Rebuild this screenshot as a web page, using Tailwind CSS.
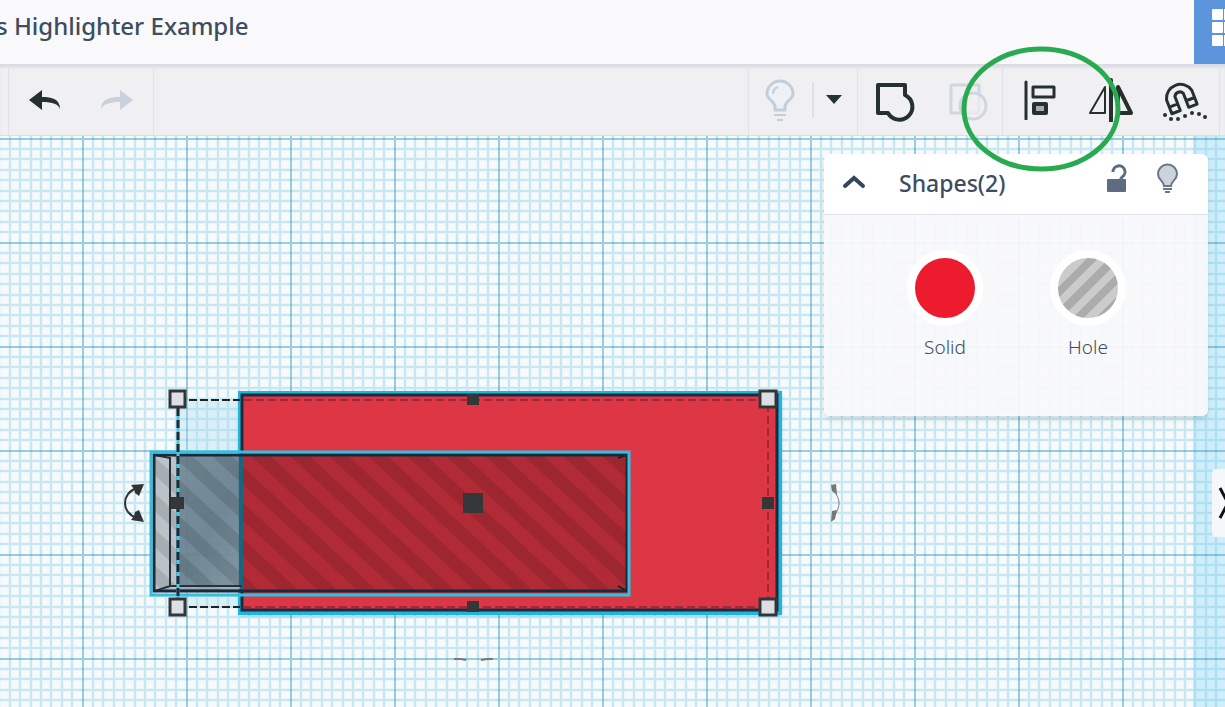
<!DOCTYPE html>
<html lang="en">
<head>
<meta charset="utf-8">
<meta name="viewport" content="width=device-width, initial-scale=1">
<title>Highlighter Example</title>
<script src="https://cdn.jsdelivr.net/npm/@tailwindcss/browser@4"></script>
</head>
<body class="relative flex h-screen flex-col overflow-hidden bg-[#f9f9fc] font-['Noto_Sans','Open_Sans',sans-serif] text-[#3d4c60]">

<header class="flex h-16 shrink-0 items-stretch justify-between bg-[#f9f9fc]">
  <h1 class="-ml-1 self-center pb-3 text-2xl font-medium whitespace-nowrap">s Highlighter Example</h1>
  <button type="button" aria-label="Dashboard" class="flex w-[31px] items-start justify-end overflow-hidden bg-[#5c95dc] pt-2">
    <svg class="h-10 w-[14px]" viewBox="0 0 14 40" fill="#fff"><rect x="1" y="1" width="11" height="11" rx="1"/><rect x="1" y="14" width="11" height="11" rx="1"/><rect x="1" y="27" width="11" height="11" rx="1"/><path d="M13 1h1v11h-1zM13 14h1v11h-1zM13 27h1v11h-1z"/></svg>
  </button>
</header>

<div role="toolbar" aria-label="Edit" class="flex h-[72px] shrink-0 justify-between border-t-2 border-b border-t-[#d9dce3] border-b-[#d5e2ea] bg-[#f0f0f2] pt-[2px] shadow-[inset_0_2px_2px_#dfe1e6]">
  <div class="ml-2 flex w-[146px] items-center justify-between border-x border-[#dfe2e8] px-5 pb-1">
    <button type="button" aria-label="Undo"><svg class="h-5 w-8" viewBox="0 0 32 20" fill="#25312f"><path d="M0 10 13 0v7c10 0 18 2 18 12-2-5-7-7-18-7v8z"/></svg></button>
    <button type="button" aria-label="Redo"><svg class="h-5 w-8" viewBox="0 0 32 20" fill="#c8d1db"><path d="M32 10 19 0v7C9 7 0 9 0 19c3-5 8-7 19-7v8z"/></svg></button>
  </div>
  <div class="flex">
    <div class="flex w-[109px] items-center border-l border-[#dfe2e8] pb-1 pl-[15px]">
      <button type="button" aria-label="Show all"><svg class="h-11 w-8" viewBox="0 0 32 44" fill="none" stroke="#c3cedb" stroke-width="3"><path d="M11 32v-4C10 23 3 21 3 16a13 13 0 0 1 26 0c0 5-7 7-8 12v4z" fill="#edf1f5" stroke-linejoin="round"/><path d="M9 16c0-4 2-6 5-7" stroke-width="2"/><path d="M10 37h12M13 42h6" stroke-width="2"/></svg></button>
      <span class="ml-4 h-9 w-[2px] bg-[#dce1e8]"></span>
      <button type="button" aria-label="Visibility options" class="ml-3"><svg class="h-5 w-4" viewBox="0 0 16 20" fill="#25312f"><path d="M0 5h16L8 14z"/></svg></button>
    </div>
    <div class="flex w-[145px] items-center justify-between border-l border-[#dfe2e8] pr-3 pl-4">
      <button type="button" aria-label="Group"><svg class="h-11 w-11" viewBox="0 0 44 44" fill="none" stroke="#25312f" stroke-width="4" stroke-linejoin="round"><path d="M4 5h27v10a13 13 0 1 1-17 18H4z"/></svg></button>
      <button type="button" aria-label="Ungroup"><svg class="h-11 w-11" viewBox="0 0 44 44" fill="none" stroke="#ced6e0" stroke-width="3" stroke-linejoin="round"><path d="M5 5h28v28H5z"/><circle cx="27" cy="26" r="13" fill="#f0f0f2" fill-opacity=".7"/></svg></button>
    </div>
    <div class="flex w-[217px] items-center justify-between border-l border-[#dfe2e8] pr-3 pb-1 pl-[21px]">
      <button type="button" aria-label="Align"><svg class="h-10 w-8" viewBox="0 0 32 40" fill="none" stroke="#25312f" stroke-linejoin="round" stroke-linecap="round"><path d="M2 2v37" stroke-width="3"/><rect x="9" y="7" width="21" height="10" stroke-width="3"/><rect x="10" y="24" width="12" height="9" fill="#aaaeb0" stroke-width="4"/></svg></button>
      <button type="button" aria-label="Mirror"><svg class="h-11 w-12" viewBox="0 0 48 44" fill="none" stroke="#25312f" stroke-linejoin="round"><path d="M19 9v26H4z" stroke-width="2"/><path d="M25 2v41" stroke-width="4" stroke-linecap="round"/><path d="M32 9v26h13z" stroke-width="4"/></svg></button>
      <button type="button" aria-label="Cruise"><svg class="h-11 w-11" viewBox="0 0 44 44"><path transform="rotate(-21 16 18)" d="M3 32V17a14 14 0 0 1 27 0v15h-9V17a5 5 0 0 0-9 0v15zM3 25h9M21 25h9" fill="none" stroke="#25312f" stroke-width="3" stroke-linejoin="round"/><g fill="#25312f"><circle cx="2" cy="37" r="2"/><circle cx="8" cy="41" r="2"/><circle cx="15" cy="41" r="2"/><circle cx="22" cy="38" r="2"/><circle cx="29" cy="35" r="2"/><circle cx="36" cy="36" r="2"/><circle cx="42" cy="39" r="2"/></g></svg></button>
    </div>
    <div class="w-[6px] border-l border-[#dfe2e8]"></div>
  </div>
</div>

<main class="relative flex-1 overflow-hidden bg-[#f6fafb]">
  <div class="absolute inset-y-0 right-0 w-8 bg-[#cfeefa]"></div>
  <svg class="absolute inset-0 h-full w-full" role="img" aria-label="Workplane with a red box and a hole box selected">
    <defs>
      <pattern id="grid" x="82" y="2" width="104" height="104" patternUnits="userSpaceOnUse">
        <path d="M11 0v104M21 0v104M32 0v104M42 0v104M53 0v104M63 0v104M73 0v104M84 0v104M94 0v104M0 11h104M0 21h104M0 32h104M0 42h104M0 53h104M0 63h104M0 73h104M0 84h104M0 94h104" stroke="#74c6e2" stroke-opacity=".08" stroke-width="4"/>
        <path d="M11 0v104M21 0v104M32 0v104M42 0v104M53 0v104M63 0v104M73 0v104M84 0v104M94 0v104M0 11h104M0 21h104M0 32h104M0 42h104M0 53h104M0 63h104M0 73h104M0 84h104M0 94h104" stroke="#66bfe0" stroke-opacity=".28" stroke-width="2"/>
        <path d="M0 1h104M1 0v104" stroke="#3c9dc0" stroke-opacity=".5" stroke-width="2"/>
      </pattern>
      <pattern id="stripes" x="4" y="12" width="39" height="36" patternUnits="userSpaceOnUse">
        <path d="M0 0h19l20 18v18zM0 18v18h19z" fill="#000" fill-opacity=".11"/>
      </pattern>
      <linearGradient id="glass" x1="0" x2="1" y1="0" y2="1"><stop stop-color="#758997"/><stop offset=".6" stop-color="#687f8e"/><stop offset="1" stop-color="#7b919d"/></linearGradient>
      <filter id="glow" x="-5%" y="-10%" width="110%" height="120%"><feGaussianBlur stdDeviation="2"/></filter>
    </defs>
    <rect width="100%" height="100%" fill="url(#grid)"/>

    <g transform="translate(0 -136)">
      <rect x="178" y="400" width="64" height="207" fill="#a8d9ef" fill-opacity=".35"/>
      <rect x="240" y="394" width="541" height="221" fill="#0e7fa5" fill-opacity=".5" filter="url(#glow)"/>
      <rect x="240" y="393" width="540" height="220" fill="#dd3745" stroke="#1fb5dc" stroke-width="4"/>
      <rect x="242" y="395" width="535" height="215" fill="none" stroke="#1d2b3e" stroke-width="3"/>
      <path d="M178 400h62M178 607h62" stroke="#222" stroke-width="2" stroke-dasharray="8 3"/>
      <path d="M244 400h524v207H244" fill="none" stroke="#a02835" stroke-width="2" stroke-dasharray="8 4"/>

      <rect x="153" y="454" width="89" height="138" fill="url(#glass)" fill-opacity=".92"/>
      <rect x="153" y="454" width="23" height="138" fill="#bcc3c8"/>
      <rect x="243" y="454" width="384" height="138" fill="#b02b36"/>
      <rect x="153" y="454" width="474" height="138" fill="url(#stripes)"/>
      <path d="M241 456v136" stroke="#176580" stroke-width="4"/>
      <path d="M170 457v130M155 455l15 3M155 591l15-5h72" stroke="#25313b" stroke-width="2" fill="none"/>
      <path d="M170 588h70" stroke="#c3ced4"/>
      <path d="M618 458l9-3M618 586l9 5" stroke="#20202c" stroke-width="2"/>
      <rect x="154" y="455" width="473" height="136" fill="none" stroke="#172a3c" stroke-width="3"/>
      <rect x="151" y="452" width="478" height="143" fill="none" stroke="#35bfdf" stroke-width="3"/>
      <path d="M178 408v190" stroke="#4cc9e8" stroke-width="3"/>
      <path d="M178 408v190" stroke="#222a2f" stroke-width="3" stroke-dasharray="8 4"/>

      <g fill="#dedfe2" stroke="#333638" stroke-width="3"><rect x="170" y="391" width="15" height="16"/><rect x="760" y="391" width="16" height="16"/><rect x="170" y="599" width="15" height="16"/><rect x="760" y="599" width="16" height="16"/></g>
      <g fill="#343638"><rect x="467" y="394" width="12" height="11"/><rect x="467" y="601" width="12" height="11"/><rect x="171" y="497" width="13" height="12"/><rect x="762" y="497" width="12" height="12"/><rect x="463" y="493" width="20" height="20"/></g>
      <path d="M137 488c-16 5-16 25 0 30" fill="none" stroke="#333" stroke-width="2"/>
      <path d="M144 484l-13 1 3 4 1 4 4 3zM144 522l-13-2 3-4 1-4 4-2z" fill="#333"/>
      <path d="M836 494c4 6 4 12 0 19" fill="none" stroke="#777" stroke-width="1"/>
      <path d="M831 485l5-1 1 11-5-4zM831 522l1-11 5-1-2 9z" fill="#777"/>
      <path d="M454 659l7 0 5 1M481 660l6-1 6 0" fill="none" stroke="#777" stroke-width="2"/>
    </g>
  </svg>

  <section aria-label="Inspector" class="absolute top-[18px] right-[17px] w-96 rounded-md shadow-md">
    <div class="flex h-[61px] items-center rounded-t-md border-b border-[#dfe2e6] bg-white pr-7 pb-[2px] pl-[18px]">
      <button type="button" aria-label="Collapse panel"><svg class="h-6 w-6" viewBox="0 0 24 24" fill="none" stroke="#34465c" stroke-width="4" stroke-linecap="round"><path d="M3 15l9-8 9 8"/></svg></button>
      <h2 class="ml-[33px] flex-1 text-[23px] font-medium">Shapes(2)</h2>
      <div class="mb-2 flex items-center gap-7">
        <button type="button" aria-label="Lock"><svg class="h-8 w-6" viewBox="0 0 24 32"><path d="M9 9a6 6 0 1 1 9 5l-3 5" fill="none" stroke="#5d6c80" stroke-width="3"/><rect x="3" y="16" width="19" height="13" rx="1" fill="#5d6c80"/></svg></button>
        <button type="button" aria-label="Hide"><svg class="h-8 w-6" viewBox="0 0 24 32" fill="none" stroke="#68778a" stroke-width="2"><path d="M8 23c0-5-6-6-6-12a9 9 0 0 1 19 0c0 6-6 7-6 12z" fill="#ccd3db"/><path d="M7 26h9M9 29h5"/></svg></button>
      </div>
    </div>
    <div class="flex h-[201px] items-start gap-[67px] rounded-b-md bg-[#f9f9fb]/93 pt-[35px] pl-[83px]">
      <button type="button" class="flex w-[76px] flex-col items-center">
        <span class="size-[76px] rounded-full border-8 border-white bg-[#ec1c2e]"></span>
        <span class="mt-[7px] text-[19px] font-light">Solid</span>
      </button>
      <button type="button" class="flex w-[76px] flex-col items-center">
        <span class="size-[76px] rounded-full border-8 border-white bg-[repeating-linear-gradient(135deg,#ababab_0_8px,#cbcbcb_8px_16px)] bg-origin-border"></span>
        <span class="mt-[7px] text-[19px] font-light">Hole</span>
      </button>
    </div>
  </section>

  <button type="button" aria-label="Toggle shapes panel" class="absolute top-[333px] right-0 h-[68px] w-[13px] overflow-hidden rounded-l-sm bg-[#f6f7f9]">
    <svg class="h-[68px] w-[13px]" viewBox="0 0 13 68" fill="none" stroke="#111" stroke-width="3"><path d="M8 19l8 15-8 15"/></svg>
  </button>
</main>

<svg class="pointer-events-none absolute top-11 right-[101px] h-32 w-[164px]" viewBox="0 0 164 128" fill="none" stroke="#2aaa50" stroke-width="5" aria-hidden="true"><ellipse cx="81" cy="65" rx="77" ry="60"/></svg>
</body>
</html>
